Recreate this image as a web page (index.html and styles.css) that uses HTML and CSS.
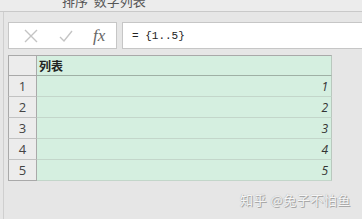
FILE: index.html
```html
<!DOCTYPE html>
<html>
<head>
<meta charset="utf-8">
<link rel="stylesheet" href="styles.css">
</head>
<body>
<div class="top"><span class="title">排序&nbsp;&nbsp;数字列表</span></div>
<div class="main">
  <div class="fbar">
    <div class="icons">
      <svg class="ico" width="16" height="16" viewBox="0 0 16 16"><path d="M2 2 L14 14 M14 2 L2 14" stroke="#c4c4c4" stroke-width="1.4" fill="none"/></svg>
      <svg class="ico" width="16" height="16" viewBox="0 0 16 16"><path d="M2 9 L6 13 L14 3" stroke="#c4c4c4" stroke-width="1.4" fill="none"/></svg>
      <span class="fx">fx</span>
    </div>
    <div class="input">= {1..5}</div>
  </div>
  <div class="grid">
    <div class="rh hd"></div><div class="cell hd head">列表</div>
    <div class="rh">1</div><div class="cell">1</div>
    <div class="rh">2</div><div class="cell">2</div>
    <div class="rh">3</div><div class="cell">3</div>
    <div class="rh">4</div><div class="cell">4</div>
    <div class="rh">5</div><div class="cell">5</div>
  </div>
</div>
<div class="wm">知乎 @兔子不怕鱼</div>
</body>
</html>
```
FILE: styles.css
```css
html, body { margin: 0; padding: 0; }
body {
  width: 362px; height: 219px; overflow: hidden;
  background: #e6e6e6;
  font-family: "Noto Sans CJK SC", "Liberation Sans", sans-serif;
  position: relative;
}
.top {
  height: 11px; border-bottom: 1px solid #c9c9c9;
  background: #ececec; overflow: hidden;
  padding-left: 62px;
}
.title {
  display: block; margin-top: -8px;
  font-size: 13px; line-height: 18px; color: #555;
}
.main {
  margin-left: 3px; border-left: 1px solid #cfcfcf;
  height: 207px; padding-left: 4px; padding-top: 10px; box-sizing: border-box;
}
.fbar { display: flex; gap: 5px; height: 27px; margin-right: -10px; }
.icons {
  background: #fff; border: 1px solid #c6c6c6;
  display: flex; align-items: center; padding-left: 14px; gap: 19px; box-sizing: border-box; width: 109px;
}
.fx {
  font-family: "Liberation Serif", serif; font-style: italic; font-size: 17px; color: #666; margin-left: 0;
}
.input {
  flex: 1; background: #fff; border: 1px solid #c6c6c6;
  font-family: "Liberation Mono", monospace; font-size: 11px; color: #222;
  display: flex; align-items: center; padding-left: 9px;
}
.grid {
  margin-top: 6px; display: grid; grid-template-columns: 29px 295px;
  grid-auto-rows: 21px; width: 324px;
}
.rh {
  background: #ececec; border-left: 1px solid #a9a9a9; border-right: 1px solid #a9a9a9;
  border-bottom: 1px solid #c2c2c2;
  font-family: "Open Sans", sans-serif; font-size: 13px; color: #444;
  display: flex; align-items: center; justify-content: center;
}
.rh.hd { border-top: 1px solid #a9a9a9; border-bottom: 1px solid #a9a9a9; }
.cell {
  background: #d5efe0; border-bottom: 1px solid #c3d6ca; border-right: 1px solid #b9c8be;
  font-family: "Open Sans", sans-serif; font-style: italic; font-size: 12px; color: #333;
  display: flex; align-items: center; justify-content: flex-end; padding-right: 3px;
}
.cell.hd { border-top: 1px solid #a9a9a9; border-bottom: 1px solid #9fb0a5; }
.head {
  justify-content: flex-start; font-style: normal; font-weight: bold;
  font-family: "Noto Sans CJK SC", sans-serif; font-size: 12px; color: #222; padding-left: 2px;
}
.grid .rh:nth-last-child(2) { border-bottom: 1px solid #a9a9a9; }
.wm {
  position: absolute; left: 240px; top: 190px;
  font-size: 13px; color: #f6f6f6; letter-spacing: 0.5px;
  text-shadow: 0 0 1px #999, 1px 1px 0 #aaa;
}
```
